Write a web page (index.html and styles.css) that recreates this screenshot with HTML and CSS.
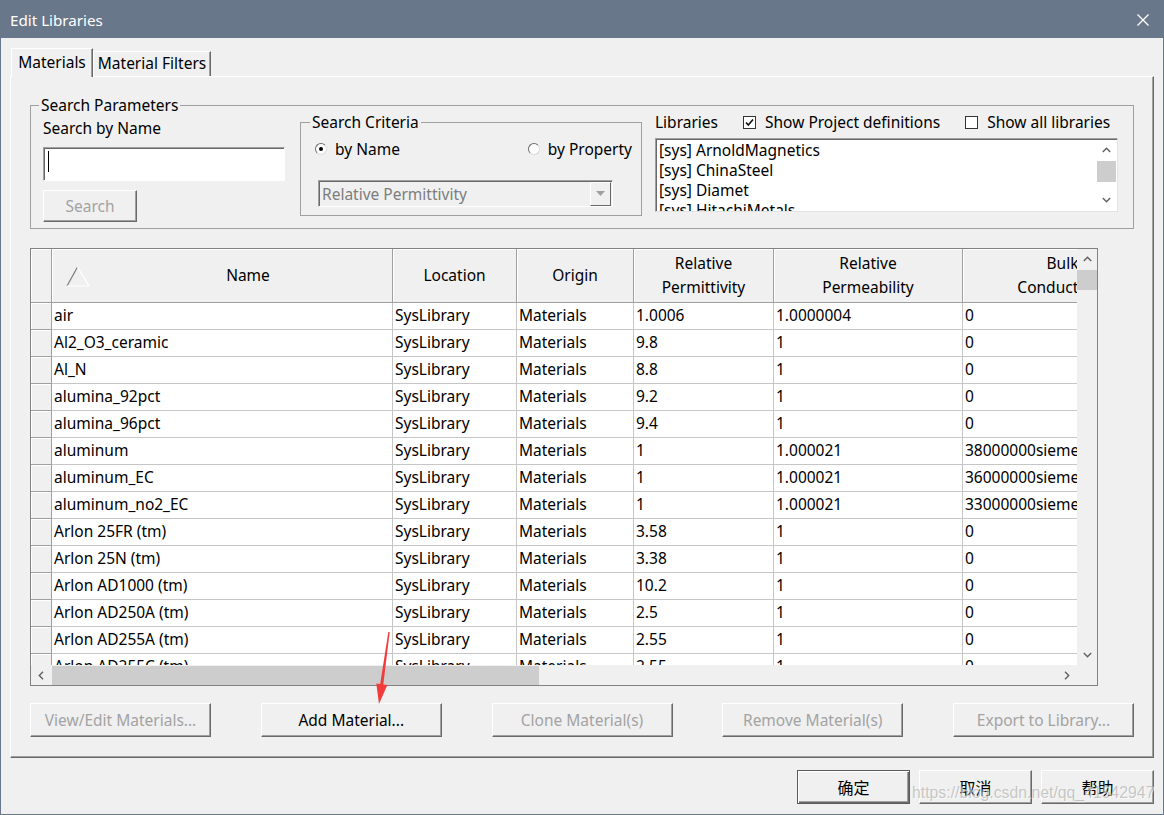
FILE: index.html
```html
<!DOCTYPE html>
<html>
<head>
<meta charset="utf-8">
<title>Edit Libraries</title>
<link rel="stylesheet" href="styles.css">
</head>
<body>
<div class="window">
  <div class="titlebar">
    <span class="title">Edit Libraries</span>
    <svg class="close" width="14" height="14" viewBox="0 0 14 14"><path d="M1.5 1.5 L12.5 12.5 M12.5 1.5 L1.5 12.5" stroke="#fff" stroke-width="1.3" fill="none"/></svg>
  </div>
  <div class="body">
    <div class="tabs">
      <div class="tab active">Materials</div>
      <div class="tab">Material Filters</div>
    </div>
    <div class="panel">
      <fieldset class="sp">
        <legend class="sp-legend">Search Parameters</legend>
        <div class="sp-body">
          <div class="left">
            <div class="label">Search by Name</div>
            <div class="textbox"><span class="caret"></span></div>
            <div class="btn btn-search disabled">Search</div>
          </div>
          <fieldset class="crit">
            <legend class="crit-legend">Search Criteria</legend>
            <div class="crit-body">
              <div class="radios">
                <div class="radio-item"><span class="radio checked"></span><span>by Name</span></div>
                <div class="radio-item"><span class="radio"></span><span>by Property</span></div>
              </div>
              <div class="select">
                <span class="select-text">Relative Permittivity</span>
                <span class="select-btn"><svg width="9" height="5" viewBox="0 0 9 5"><path d="M0 0 L9 0 L4.5 5 Z" fill="#a0a0a0"/></svg></span>
              </div>
            </div>
          </fieldset>
          <div class="libs">
            <div class="libs-head">
              <span>Libraries</span>
              <div class="chk-item"><svg class="chk" width="13" height="13" viewBox="0 0 13 13"><rect x="0.5" y="0.5" width="12" height="12" fill="#fff" stroke="#333"/><path d="M3 6.5 L5.3 9 L10 3.5" stroke="#111" stroke-width="1.6" fill="none"/></svg><span>Show Project definitions</span></div>
              <div class="chk-item"><svg class="chk" width="13" height="13" viewBox="0 0 13 13"><rect x="0.5" y="0.5" width="12" height="12" fill="#fff" stroke="#333"/></svg><span>Show all libraries</span></div>
            </div>
            <div class="list">
              <div class="list-items">
                <div>[sys] ArnoldMagnetics</div>
                <div>[sys] ChinaSteel</div>
                <div>[sys] Diamet</div>
                <div>[sys] HitachiMetals</div>
              </div>
              <div class="list-vs">
                <div class="arrow-box"><svg width="9" height="6" viewBox="0 0 9 6"><path d="M0.8 5 L4.5 1.3 L8.2 5" stroke="#606060" stroke-width="1.4" fill="none"/></svg></div>
                <div class="list-thumb"></div>
                <div class="track"></div>
                <div class="arrow-box"><svg width="9" height="6" viewBox="0 0 9 6"><path d="M0.8 1 L4.5 4.7 L8.2 1" stroke="#606060" stroke-width="1.4" fill="none"/></svg></div>
              </div>
            </div>
          </div>
        </div>
      </fieldset>

      <div class="grid">
        <div class="viewport">
          <div class="hrow">
            <div class="hc w0"></div>
            <div class="hc w1 namehead">
              <svg class="sort" width="24" height="21" viewBox="0 0 24 21"><path d="M11.5 1 L1 20" stroke="#7a7a7a" stroke-width="1.2" fill="none"/><path d="M11.5 1 L23 20 L1 20" stroke="#ffffff" stroke-width="1.2" fill="none"/></svg>
              <span class="namehead-text">Name</span>
            </div>
            <div class="hc w2">Location</div>
            <div class="hc w3">Origin</div>
            <div class="hc w4">Relative<br>Permittivity</div>
            <div class="hc w5">Relative<br>Permeability</div>
            <div class="hc w6">Bulk<br>Conductivity</div>
          </div>
          <div class="row"><div class="rh w0"></div><div class="c w1">air</div><div class="c w2">SysLibrary</div><div class="c w3">Materials</div><div class="c w4">1.0006</div><div class="c w5">1.0000004</div><div class="c w6">0</div></div>
          <div class="row"><div class="rh w0"></div><div class="c w1">Al2_O3_ceramic</div><div class="c w2">SysLibrary</div><div class="c w3">Materials</div><div class="c w4">9.8</div><div class="c w5">1</div><div class="c w6">0</div></div>
          <div class="row"><div class="rh w0"></div><div class="c w1">Al_N</div><div class="c w2">SysLibrary</div><div class="c w3">Materials</div><div class="c w4">8.8</div><div class="c w5">1</div><div class="c w6">0</div></div>
          <div class="row"><div class="rh w0"></div><div class="c w1">alumina_92pct</div><div class="c w2">SysLibrary</div><div class="c w3">Materials</div><div class="c w4">9.2</div><div class="c w5">1</div><div class="c w6">0</div></div>
          <div class="row"><div class="rh w0"></div><div class="c w1">alumina_96pct</div><div class="c w2">SysLibrary</div><div class="c w3">Materials</div><div class="c w4">9.4</div><div class="c w5">1</div><div class="c w6">0</div></div>
          <div class="row"><div class="rh w0"></div><div class="c w1">aluminum</div><div class="c w2">SysLibrary</div><div class="c w3">Materials</div><div class="c w4">1</div><div class="c w5">1.000021</div><div class="c w6">38000000siemens/m</div></div>
          <div class="row"><div class="rh w0"></div><div class="c w1">aluminum_EC</div><div class="c w2">SysLibrary</div><div class="c w3">Materials</div><div class="c w4">1</div><div class="c w5">1.000021</div><div class="c w6">36000000siemens/m</div></div>
          <div class="row"><div class="rh w0"></div><div class="c w1">aluminum_no2_EC</div><div class="c w2">SysLibrary</div><div class="c w3">Materials</div><div class="c w4">1</div><div class="c w5">1.000021</div><div class="c w6">33000000siemens/m</div></div>
          <div class="row"><div class="rh w0"></div><div class="c w1">Arlon 25FR (tm)</div><div class="c w2">SysLibrary</div><div class="c w3">Materials</div><div class="c w4">3.58</div><div class="c w5">1</div><div class="c w6">0</div></div>
          <div class="row"><div class="rh w0"></div><div class="c w1">Arlon 25N (tm)</div><div class="c w2">SysLibrary</div><div class="c w3">Materials</div><div class="c w4">3.38</div><div class="c w5">1</div><div class="c w6">0</div></div>
          <div class="row"><div class="rh w0"></div><div class="c w1">Arlon AD1000 (tm)</div><div class="c w2">SysLibrary</div><div class="c w3">Materials</div><div class="c w4">10.2</div><div class="c w5">1</div><div class="c w6">0</div></div>
          <div class="row"><div class="rh w0"></div><div class="c w1">Arlon AD250A (tm)</div><div class="c w2">SysLibrary</div><div class="c w3">Materials</div><div class="c w4">2.5</div><div class="c w5">1</div><div class="c w6">0</div></div>
          <div class="row"><div class="rh w0"></div><div class="c w1">Arlon AD255A (tm)</div><div class="c w2">SysLibrary</div><div class="c w3">Materials</div><div class="c w4">2.55</div><div class="c w5">1</div><div class="c w6">0</div></div>
          <div class="row"><div class="rh w0"></div><div class="c w1">Arlon AD255C (tm)</div><div class="c w2">SysLibrary</div><div class="c w3">Materials</div><div class="c w4">2.55</div><div class="c w5">1</div><div class="c w6">0</div></div>
        </div>
        <div class="vs">
          <div class="arrow-box"><svg width="9" height="6" viewBox="0 0 9 6"><path d="M0.8 5 L4.5 1.3 L8.2 5" stroke="#606060" stroke-width="1.4" fill="none"/></svg></div>
          <div class="vthumb"></div>
          <div class="track"></div>
          <div class="arrow-box"><svg width="9" height="6" viewBox="0 0 9 6"><path d="M0.8 1 L4.5 4.7 L8.2 1" stroke="#606060" stroke-width="1.4" fill="none"/></svg></div>
        </div>
        <div class="hs">
          <div class="arrow-box h"><svg width="6" height="9" viewBox="0 0 6 9"><path d="M5 0.8 L1.3 4.5 L5 8.2" stroke="#606060" stroke-width="1.4" fill="none"/></svg></div>
          <div class="hthumb"></div>
          <div class="track"></div>
          <div class="arrow-box h"><svg width="6" height="9" viewBox="0 0 6 9"><path d="M1 0.8 L4.7 4.5 L1 8.2" stroke="#606060" stroke-width="1.4" fill="none"/></svg></div>
        </div>
        <div class="corner"></div>
      </div>

      <div class="actions">
        <div class="btn disabled">View/Edit Materials...</div>
        <div class="btn">Add Material...</div>
        <div class="btn disabled">Clone Material(s)</div>
        <div class="btn disabled">Remove Material(s)</div>
        <div class="btn disabled">Export to Library...</div>
      </div>
    </div>
    <div class="footer">
      <div class="btn fbtn default">确定</div>
      <div class="btn fbtn">取消</div>
      <div class="btn fbtn">帮助</div>
    </div>
  </div>

  <svg class="annot-arrow" width="1164" height="815" viewBox="0 0 1164 815">
    <polygon points="388.3,632 389.7,632 383.3,684.4 387.3,685 379,704 376.3,683.4 380.2,684" fill="#f23b3b"/>
  </svg>
  <div class="watermark">https://blog.csdn.net/qq_41542947</div>
</div>
</body>
</html>
```

FILE: styles.css
```css
* { box-sizing: border-box; }
html, body { margin: 0; padding: 0; }
body {
  width: 1164px;
  height: 815px;
  overflow: hidden;
  font-family: "Noto Sans", "Noto Sans CJK SC", sans-serif;
  font-size: 15.5px;
  color: #000;
  background: #f0f0f0;
}
.window {
  position: relative;
  width: 1164px;
  height: 815px;
  border: 1px solid #687789;
  background: #f0f0f0;
  display: flex;
  flex-direction: column;
}
.titlebar {
  height: 37px;
  flex: none;
  background: #687789;
  color: #fff;
  display: flex;
  align-items: center;
  justify-content: space-between;
  padding: 0 13px 0 9px;
  font-size: 15.2px;
}
.close { display: block; }
.body {
  flex: 1;
  padding: 10px 9px 0 9px;
  display: flex;
  flex-direction: column;
}
.tabs {
  display: flex;
  align-items: flex-end;
  height: 28px;
  flex: none;
  padding-left: 1px;
}
.tab {
  height: 25px;
  width: 118px;
  line-height: 23px;
  text-align: center;
  border-top: 1px solid #fff;
  border-left: 1px solid #fff;
  border-right: 1px solid #696969;
  box-shadow: inset -1px 0 #a0a0a0;
  background: #f0f0f0;
}
.tab.active {
  position: relative;
  z-index: 1;
  width: 82px;
  height: 29px;
  line-height: 27px;
  margin-bottom: -1px;
}
.panel {
  height: 682px;
  flex: none;
  border-top: 1px solid #fff;
  border-left: 1px solid #fff;
  border-right: 1px solid #696969;
  border-bottom: 1px solid #696969;
  box-shadow: inset -1px -1px #a0a0a0;
  padding: 21px 19px 20px 19px;
  display: flex;
  flex-direction: column;
}

/* Search parameters */
fieldset { margin: 0; padding: 0; min-width: 0; }
.sp {
  height: 131px;
  flex: none;
  border: 1px solid #a0a0a0;
}
.sp-legend {
  margin-left: 8px;
  padding: 0 2px;
  line-height: 14px;
}
.sp-body {
  display: flex;
  align-items: flex-start;
  padding: 0 15px 0 12px;
}
.left {
  width: 242px;
  flex: none;
  padding-top: 6px;
  display: flex;
  flex-direction: column;
}
.label { line-height: 20px; }
.textbox {
  margin-top: 9px;
  height: 34px;
  background: #fff;
  border: 1px solid;
  border-color: #a0a0a0 #fff #fff #a0a0a0;
  box-shadow: inset 1px 1px #696969;
  padding: 3px 0 0 3px;
}
.caret {
  display: block;
  width: 1px;
  height: 21px;
  margin-left: 1px;
  background: #000;
}
.btn {
  display: flex;
  align-items: center;
  justify-content: center;
  height: 34px;
  width: 181px;
  background: #f0f0f0;
  border-top: 1px solid #fff;
  border-left: 1px solid #fff;
  border-right: 1px solid #696969;
  border-bottom: 1px solid #696969;
  box-shadow: inset -1px -1px #a0a0a0;
  white-space: nowrap;
}
.btn.disabled { color: #a3a3a3; }
.btn-search {
  margin-top: 9px;
  width: 94px;
  height: 32px;
}

.crit {
  width: 342px;
  height: 104px;
  flex: none;
  margin-left: 15px;
  border: 1px solid #a0a0a0;
}
.crit-legend {
  margin-left: 9px;
  padding: 0 2px;
  line-height: 20px;
}
.crit-body { padding: 7px 9px 0 14px; }
.radios {
  display: flex;
  justify-content: space-between;
  line-height: 20px;
}
.radio-item {
  display: flex;
  align-items: center;
  gap: 8px;
}
.radio {
  width: 12px;
  height: 12px;
  border-radius: 50%;
  border: 1px solid;
  border-color: #6d6d6d #dcdcdc #dcdcdc #6d6d6d;
  background: #fff;
  display: flex;
  align-items: center;
  justify-content: center;
}
.radio.checked::after {
  content: "";
  width: 4px;
  height: 4px;
  border-radius: 50%;
  background: #000;
}
.select {
  margin: 21px 0 0 3px;
  width: 295px;
  height: 27px;
  display: flex;
  align-items: center;
  justify-content: space-between;
  border: 1px solid;
  border-color: #a0a0a0 #fff #fff #a0a0a0;
  box-shadow: inset 1px 1px #696969;
  background: #f0f0f0;
  padding: 1px 1px 1px 3px;
}
.select-text { color: #7d7d7d; }
.select-btn {
  width: 21px;
  height: 24px;
  display: flex;
  align-items: center;
  justify-content: center;
  border-top: 1px solid #fff;
  border-left: 1px solid #fff;
  border-right: 1px solid #696969;
  border-bottom: 1px solid #696969;
  background: #f0f0f0;
}

.libs {
  width: 463px;
  flex: none;
  margin-left: 13px;
}
.libs-head {
  display: flex;
  align-items: center;
  height: 20px;
  line-height: 20px;
}
.chk-item {
  margin-left: 25px;
  display: flex;
  align-items: center;
  gap: 9px;
}
.chk { display: block; }
.list {
  margin-top: 6px;
  height: 74px;
  display: flex;
  background: #fff;
  border: 1px solid;
  border-color: #a0a0a0 #e3e3e3 #e3e3e3 #a0a0a0;
  box-shadow: inset 1px 1px #696969;
}
.list-items {
  flex: 1;
  padding: 1px 0 0 3px;
  line-height: 20px;
  overflow: hidden;
  white-space: nowrap;
}
.list-vs {
  width: 19px;
  flex: none;
  margin: 1px 1px 1px 0;
  display: flex;
  flex-direction: column;
  background: #fff;
}
.arrow-box {
  height: 20px;
  flex: none;
  display: flex;
  align-items: center;
  justify-content: center;
}
.arrow-box svg { display: block; }
.list-thumb { height: 21px; flex: none; margin-top: 1px; background: #cdcdcd; }
.track { flex: 1; }

/* Grid */
.grid {
  margin-top: 19px;
  width: 1068px;
  height: 438px;
  flex: none;
  border: 1px solid #828282;
  display: grid;
  grid-template-columns: 1fr 20px;
  grid-template-rows: 1fr 20px;
  background: #f0f0f0;
}
.viewport {
  overflow: hidden;
  background: #fff;
  min-width: 0;
}
.hrow, .row {
  display: flex;
  width: max-content;
}
.hrow { height: 54px; }
.row { height: 27px; }
.w0 { width: 21px; }
.w1 { width: 341px; }
.w2 { width: 124px; }
.w3 { width: 117px; }
.w4 { width: 140px; }
.w5 { width: 189px; }
.w6 { width: 200px; }
.hc, .c, .rh { flex: none; }
.hc {
  height: 54px;
  border-right: 1px solid #a0a0a0;
  border-bottom: 1px solid #a0a0a0;
  box-shadow: inset 1px 1px #fff;
  background: #f0f0f0;
  display: flex;
  align-items: center;
  justify-content: center;
  text-align: center;
  line-height: 24px;
  padding-bottom: 2px;
}
.namehead {
  justify-content: flex-start;
  padding-left: 14px;
}
.sort { display: block; flex: none; margin-top: 3px; }
.namehead-text {
  flex: 1;
  text-align: center;
  margin-left: 14px;
}
.rh {
  height: 27px;
  background: #f0f0f0;
  border-right: 1px solid #a0a0a0;
  border-bottom: 1px solid #a0a0a0;
  box-shadow: inset 1px 1px #fff;
}
.c {
  height: 27px;
  border-right: 1px solid #c6c6c6;
  border-bottom: 1px solid #c6c6c6;
  padding-left: 2px;
  line-height: 25px;
  white-space: nowrap;
  overflow: hidden;
  background: #fff;
}
.vs {
  display: flex;
  flex-direction: column;
  background: #f0f0f0;
}
.vthumb { height: 20px; flex: none; margin-top: 1px; background: #cdcdcd; }
.hs {
  display: flex;
  background: #f0f0f0;
  min-width: 0;
}
.arrow-box.h { width: 20px; height: auto; }
.hthumb { width: 487px; flex: none; margin: 1px 0 0 1px; background: #cdcdcd; }
.corner { background: #f0f0f0; }

.actions {
  margin-top: 17px;
  display: flex;
  justify-content: space-between;
}

.footer {
  margin-top: 12px;
  display: flex;
  justify-content: flex-end;
  gap: 9px;
}
.fbtn {
  width: 113px;
  font-size: 16px;
  font-family: "Noto Sans CJK SC", sans-serif;
}
.fbtn.default {
  border: 1px solid #5a5a5a;
  box-shadow: inset 1px 1px #fff, inset -1px -1px #696969, inset -2px -2px #a0a0a0;
}

.annot-arrow {
  position: absolute;
  left: -1px;
  top: -1px;
  pointer-events: none;
}
.watermark {
  position: absolute;
  left: 911px;
  top: 783px;
  font-family: "Liberation Sans", sans-serif;
  font-size: 15.8px;
  color: rgba(160, 160, 160, 0.55);
  text-shadow: 1px 1px 0 rgba(255, 255, 255, 0.6);
  white-space: nowrap;
  pointer-events: none;
}
```
